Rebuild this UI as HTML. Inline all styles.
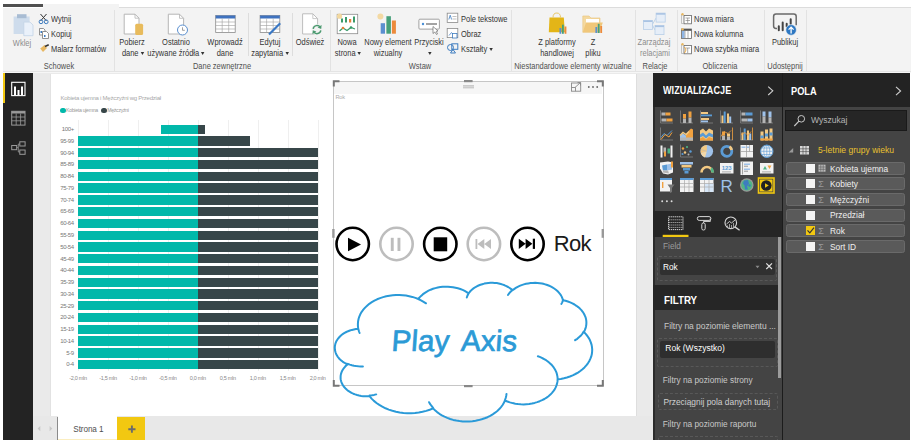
<!DOCTYPE html>
<html><head><meta charset="utf-8">
<style>
*{margin:0;padding:0;box-sizing:border-box}
html,body{width:911px;height:442px;overflow:hidden;background:#fff;font-family:"Liberation Sans",sans-serif;position:relative}
.a{position:absolute}
.t{position:absolute;white-space:nowrap;line-height:1}
.c{position:absolute;white-space:nowrap;line-height:1;text-align:center;width:200px}
.rb{font-size:8.7px;color:#333;transform:scaleX(0.86)}
.t.rb{transform-origin:0 0}
.c.rb{transform-origin:50% 0}
svg{position:absolute;overflow:visible}

</style></head><body>

<div class="a" style="left:3px;top:4px;width:40px;height:3px;background:#505050"></div>
<div class="a" style="left:43px;top:4px;width:76px;height:4px;background:#f3f3f3"></div>
<div class="a" style="left:119px;top:7px;width:792px;height:1px;background:#dcdcdc"></div>
<div class="a" style="left:3px;top:8px;width:908px;height:64px;background:#f3f3f3;border-bottom:1px solid #e4e4e4"></div>
<div class="a" style="left:3px;top:72px;width:908px;height:1px;background:#f6f6f6"></div>
<div class="a" style="left:3px;top:73px;width:30px;height:367px;background:#232323"></div>
<div class="a" style="left:3px;top:73px;width:2px;height:30px;background:#f2c811"></div>
<div class="a" style="left:33px;top:73px;width:620px;height:367px;background:#eaeaea"></div>
<div class="a" style="left:49.5px;top:73.5px;width:1.5px;height:342.5px;background:#e2e2e2"></div><div class="a" style="left:51px;top:73.5px;width:584.5px;height:342.5px;background:#fff"></div><div class="a" style="left:635.5px;top:73.5px;width:1.5px;height:342.5px;background:#dedede"></div>
<div class="a" style="left:653px;top:73px;width:257px;height:367px;background:#444"></div>
<div class="a" style="left:782px;top:73px;width:1px;height:367px;background:#1c1c1c"></div><div class="a" style="left:653px;top:73px;width:1.5px;height:367px;background:#2c2c2c"></div>

<div class="a" style="left:114px;top:10px;width:1px;height:61px;background:#e2e2e2"></div><div class="a" style="left:330px;top:10px;width:1px;height:61px;background:#e2e2e2"></div><div class="a" style="left:511px;top:10px;width:1px;height:61px;background:#e2e2e2"></div><div class="a" style="left:635px;top:10px;width:1px;height:61px;background:#e2e2e2"></div><div class="a" style="left:677px;top:10px;width:1px;height:61px;background:#e2e2e2"></div><div class="a" style="left:764px;top:10px;width:1px;height:61px;background:#e2e2e2"></div><div class="a" style="left:806px;top:10px;width:1px;height:61px;background:#e2e2e2"></div><div class="a" style="left:248px;top:13px;width:1px;height:43px;background:#dddddd"></div><div class="a" style="left:292px;top:13px;width:1px;height:43px;background:#dddddd"></div><svg style="left:0;top:0" width="911" height="72" viewBox="0 0 911 72">
<!-- Wklej -->
<rect x="13.6" y="16.5" width="16" height="17.5" fill="#cedcec"/>
<rect x="17" y="14.2" width="9.5" height="4" fill="#a8bcd3"/>
<path d="M23.8,22.1 H30 L33,25 V35.7 H23.8 Z" fill="#eaf1fa" stroke="#c2d3e6" stroke-width="0.8"/>
<!-- scissors -->
<path d="M40.5,14 L46.5,21 M46.5,14 L40.5,21" stroke="#333" stroke-width="1"/>
<circle cx="41" cy="21.8" r="1.9" fill="none" stroke="#3d7cc0" stroke-width="1"/>
<circle cx="46.2" cy="21.8" r="1.9" fill="none" stroke="#3d7cc0" stroke-width="1"/>
<!-- copy -->
<path d="M39.5,28.5 H43.5 L45,30 V35 H39.5 Z" fill="#fff" stroke="#777" stroke-width="0.8"/>
<path d="M42.5,31.5 H46.5 L48.5,33.5 V38.5 H42.5 Z" fill="#fff" stroke="#777" stroke-width="0.8"/>
<rect x="40.5" y="31" width="1.5" height="2" fill="#3d7cc0"/><rect x="44" y="35" width="1.5" height="2" fill="#3d7cc0"/>
<!-- brush -->
<path d="M40.2,48.5 L44.5,45 L47,48 L43,52 Z" fill="#e8b862"/>
<path d="M45,46.5 L48.7,44.7" stroke="#333" stroke-width="1.6"/>
<!-- Pobierz dane -->
<path d="M124.2,14.2 H135 L139,18.2 V34 H124.2 Z" fill="#fff" stroke="#b5b5b5" stroke-width="1"/><path d="M135,14.2 V18.2 H139" fill="none" stroke="#b5b5b5" stroke-width="0.8"/>
<rect x="135.2" y="23.8" width="7.9" height="11.1" rx="1.5" fill="#e8bb5c"/>
<!-- Ostatnio -->
<path d="M168.3,14.2 H179.5 L183.6,18.3 V34 H168.3 Z" fill="#fff" stroke="#b5b5b5" stroke-width="1"/><path d="M179.5,14.2 V18.3 H183.6" fill="none" stroke="#b5b5b5" stroke-width="0.8"/>
<circle cx="182.5" cy="30" r="5" fill="#fff" stroke="#5a8fd0" stroke-width="1"/>
<path d="M182.5,27.3 V30.3 H184.8" stroke="#888" stroke-width="0.8" fill="none"/>
<!-- Wprowadz -->
<rect x="215.7" y="15.5" width="19.5" height="16.9" fill="#fff" stroke="#8a8a8a" stroke-width="0.8"/>
<rect x="215.7" y="15.5" width="19.5" height="3" fill="#3f72bf"/>
<path d="M222.2,18.5 V32.4 M228.7,18.5 V32.4 M215.7,22 H235.2 M215.7,25.5 H235.2 M215.7,29 H235.2" stroke="#a0a0a0" stroke-width="0.6"/>
<!-- Edytuj -->
<rect x="260.1" y="15.5" width="19.7" height="16.9" fill="#fff" stroke="#8a8a8a" stroke-width="0.8"/>
<rect x="260.1" y="15.5" width="19.7" height="3" fill="#3f72bf"/>
<path d="M266.6,18.5 V32.4 M273.2,18.5 V32.4 M260.1,22 H279.8 M260.1,25.5 H279.8 M260.1,29 H279.8" stroke="#a0a0a0" stroke-width="0.6"/>
<path d="M269,34.5 L280.2,23.3" stroke="#3a78c5" stroke-width="2.2"/>
<!-- Odswiez -->
<path d="M302.6,13.8 H312.8 L317.6,18.6 V34 H302.6 Z" fill="#fff" stroke="#bdbdbd" stroke-width="1"/>
<path d="M312.8,13.8 V18.6 H317.6" fill="none" stroke="#bdbdbd" stroke-width="0.8"/>
<circle cx="317" cy="29.6" r="5.6" fill="#f3f3f3"/>
<path d="M313.2,28.8 A3.9,3.9 0 0 1 320.3,27.3" fill="none" stroke="#4c9a70" stroke-width="1.5"/>
<path d="M321.6,25 L321.2,29 L317.6,27.6 Z" fill="#4c9a70"/>
<path d="M320.8,30.4 A3.9,3.9 0 0 1 313.7,31.9" fill="none" stroke="#4c9a70" stroke-width="1.5"/>
<path d="M312.4,34.2 L312.8,30.2 L316.4,31.6 Z" fill="#4c9a70"/>
<!-- Nowa strona -->
<rect x="337.2" y="14.3" width="20.5" height="19.4" fill="#fff" stroke="#8c8c8c" stroke-width="0.8"/>
<rect x="341" y="18.5" width="2" height="4" fill="#3a9a6a"/><rect x="345" y="17" width="2" height="5.5" fill="#3a9a6a"/><rect x="349" y="19" width="2.2" height="3.5" fill="#e8803a"/><rect x="353" y="16.5" width="2" height="6" fill="#3a9a6a"/>
<path d="M339.5,31 L343,28 L347,30.5 L351,27.5 L355,29" stroke="#3a9a6a" stroke-width="1.2" fill="none"/>
<circle cx="343" cy="28" r="1.3" fill="#e8803a"/><circle cx="351" cy="27.5" r="1.3" fill="#3a9a6a"/>
<circle cx="339.5" cy="16.2" r="2.6" fill="#f2d8a0"/>
<!-- Nowy element -->
<rect x="380.7" y="23.2" width="4.3" height="10.5" fill="#5b8fd0"/>
<rect x="386.4" y="16.2" width="4.5" height="17.5" fill="#46a07a"/>
<rect x="391.9" y="20.5" width="4" height="13.2" fill="#ec8a3c"/>
<circle cx="380.4" cy="16.4" r="3" fill="#f3d9a3"/>
<!-- Przyciski -->
<rect x="418.9" y="19.2" width="20.5" height="9.9" rx="1" fill="#fff" stroke="#8c8c8c" stroke-width="0.8"/>
<circle cx="423" cy="24" r="1.2" fill="#4a8fd6"/>
<path d="M426,24 H437" stroke="#666" stroke-width="1.2"/>
<path d="M433,26.5 L433,33.5 L434.8,32 L436.5,34.5 L437.5,34 L436.2,31.4 L438,31 Z" fill="#fff" stroke="#555" stroke-width="0.6"/>
<!-- Pole tekstowe -->
<rect x="447.2" y="13.2" width="10.6" height="9.2" fill="#fff" stroke="#8a8a8a" stroke-width="0.8"/>
<path d="M448.8,19.5 L450.2,15.2 L451.6,19.5" stroke="#3d7cc0" stroke-width="0.8" fill="none"/>
<path d="M452.5,16.5 H456.5 M452.5,19 H456.5" stroke="#999" stroke-width="0.6"/>
<!-- Obraz -->
<rect x="447.2" y="28.4" width="10.6" height="9.2" fill="#fff" stroke="#8a8a8a" stroke-width="0.8"/>
<path d="M449,35.5 L451.5,32.5 L454,35.5" stroke="#5a8fd0" stroke-width="0.9" fill="none"/>
<rect x="452.5" y="33.5" width="4.5" height="4.5" fill="#fff" stroke="#3d7cc0" stroke-width="0.8"/>
<!-- Ksztalty -->
<circle cx="450.5" cy="47.5" r="3" fill="none" stroke="#3d7cc0" stroke-width="1"/>
<rect x="451.8" y="43.8" width="6" height="5.5" fill="none" stroke="#3d7cc0" stroke-width="1"/>
<path d="M450.5,53 L453,49.5 L455.5,53 Z" fill="none" stroke="#3d7cc0" stroke-width="1"/>
<!-- Z platformy -->
<path d="M549.5,17.6 L563.8,17.6 L564.9,32.3 L548.8,32.3 Z" fill="#e3b517"/>
<path d="M553,17.6 Q553,13 556.8,13 Q560.5,13 560.5,17.6" fill="none" stroke="#e8c766" stroke-width="1"/>
<rect x="559.5" y="28" width="1.8" height="5.8" fill="#5b8fd0"/><rect x="562" y="24.7" width="1.8" height="9.1" fill="#46a07a"/><rect x="564.6" y="26.5" width="1.8" height="7.3" fill="#ec8a3c"/>
<!-- Z pliku -->
<path d="M582.8,16 H589 L591,18 H600 V32.3 H582.8 Z" fill="#f4d9a0" stroke="#e9c47a" stroke-width="0.6"/>
<rect x="586" y="19" width="13" height="8" fill="#fff"/>
<path d="M582.8,32.3 L586,22.5 H602.8 L599.5,32.3 Z" fill="#f0c77a"/>
<rect x="595.4" y="27" width="1.8" height="6" fill="#5b8fd0"/><rect x="597.8" y="23.8" width="1.8" height="9.2" fill="#46a07a"/><rect x="600.3" y="26" width="1.8" height="7" fill="#ec8a3c"/>
<!-- Zarzadzaj -->
<path d="M652.4,24.5 L656.1,18 M652.4,25 L655,30" stroke="#b8cfe8" stroke-width="0.9"/>
<rect x="643.4" y="20.4" width="9" height="9.1" fill="#e6eef8" stroke="#b8cfe8" stroke-width="0.8"/><rect x="643.4" y="20.4" width="9" height="1.6" fill="#a9c3e3"/>
<rect x="656.1" y="13.1" width="9.1" height="9" fill="#e6eef8" stroke="#b8cfe8" stroke-width="0.8"/><rect x="656.1" y="13.1" width="9.1" height="1.6" fill="#a9c3e3"/>
<rect x="655" y="25.5" width="9" height="9.1" fill="#e6eef8" stroke="#b8cfe8" stroke-width="0.8"/><rect x="655" y="25.5" width="9" height="1.6" fill="#a9c3e3"/>
<!-- Obliczenia icons -->
<rect x="684" y="15.5" width="7.4" height="8.3" fill="#fff" stroke="#666" stroke-width="0.8"/><path d="M685.5,18 H690 M685.5,20.5 H690 M687.7,18 V23" stroke="#777" stroke-width="0.6"/><path d="M681.5,14 V23.5 H684" stroke="#aaa" stroke-width="0.7" fill="none"/><circle cx="682.5" cy="14.2" r="1.2" fill="#e8b862"/>
<rect x="681.5" y="29" width="9.9" height="9.5" fill="#fff" stroke="#666" stroke-width="0.8"/><rect x="681.5" y="29" width="9.9" height="1.8" fill="#555"/><rect x="682" y="31" width="2.5" height="7" fill="#8fb6e6"/><path d="M685,31 V38.5 M688,31 V38.5" stroke="#777" stroke-width="0.6"/><circle cx="682.5" cy="29.2" r="1.2" fill="#e8b862"/>
<rect x="684" y="45.5" width="7.4" height="8.3" fill="#fff" stroke="#666" stroke-width="0.8"/><path d="M685.5,48 H690 M687.7,48 V53" stroke="#777" stroke-width="0.6"/><path d="M681.5,44 V53.5 H684" stroke="#aaa" stroke-width="0.7" fill="none"/><path d="M684.5,47 L686,50 L684.5,53" stroke="#e8a030" stroke-width="0.9" fill="none"/><circle cx="682.5" cy="44.2" r="1.2" fill="#e8b862"/>
<!-- Publikuj -->
<path d="M777,28.4 H776 Q773.6,28.4 773.6,26 V16.5 Q773.6,14.1 776,14.1 H793.8 Q796.2,14.1 796.2,16.5 V25.2" fill="none" stroke="#6a6a6a" stroke-width="1.5"/>
<path d="M778.8,26.2 V30.2 M782.7,22.4 V30.2 M786.7,23.7 V26.5 M790.7,19.2 V24" stroke="#444" stroke-width="2" stroke-linecap="round"/>
<circle cx="791.1" cy="29.9" r="5.3" fill="#2e78c2" stroke="#f3f3f3" stroke-width="0.6"/>
<path d="M791.1,33.4 V27.3 M788.6,29.6 L791.1,27.1 L793.6,29.6" stroke="#fff" stroke-width="1.3" fill="none"/>
</svg><div class="c rb" style="left:-41.4px;top:62.4px;font-size:8.7px;color:#505050;">Schowek</div>
<div class="c rb" style="left:121.5px;top:62.4px;font-size:8.7px;color:#505050;">Dane zewnętrzne</div>
<div class="c rb" style="left:320.0px;top:62.4px;font-size:8.7px;color:#505050;">Wstaw</div>
<div class="c rb" style="left:472.5px;top:62.4px;font-size:8.7px;color:#505050;">Niestandardowe elementy wizualne</div>
<div class="c rb" style="left:554.5px;top:62.4px;font-size:8.7px;color:#505050;">Relacje</div>
<div class="c rb" style="left:619.6px;top:62.4px;font-size:8.7px;color:#505050;">Obliczenia</div>
<div class="c rb" style="left:685.0px;top:62.4px;font-size:8.7px;color:#505050;">Udostępnij</div>
<div class="c rb" style="left:-78.4px;top:39.0px;font-size:8.7px;color:#8c8c8c;">Wklej</div>
<div class="t rb" style="left:51.4px;top:15.2px;font-size:8.7px;color:#333;">Wytnij</div>
<div class="t rb" style="left:51.4px;top:29.8px;font-size:8.7px;color:#333;">Kopiuj</div>
<div class="t rb" style="left:51.4px;top:45.0px;font-size:8.7px;color:#333;">Malarz formatów</div>
<div class="c rb" style="left:32.0px;top:38.4px;font-size:8.7px;color:#333;">Pobierz</div>
<div class="c rb" style="left:32.5px;top:48.7px;font-size:8.7px;color:#333;">dane<span style="display:inline-block;width:0;height:0;border-left:2.6px solid transparent;border-right:2.6px solid transparent;border-top:3.4px solid #333;margin-left:2.5px;vertical-align:1.2px"></span></div>
<div class="c rb" style="left:76.4px;top:38.4px;font-size:8.7px;color:#333;">Ostatnio</div>
<div class="c rb" style="left:76.0px;top:48.7px;font-size:8.7px;color:#333;">używane źródła<span style="display:inline-block;width:0;height:0;border-left:2.6px solid transparent;border-right:2.6px solid transparent;border-top:3.4px solid #333;margin-left:2.5px;vertical-align:1.2px"></span></div>
<div class="c rb" style="left:125.0px;top:38.4px;font-size:8.7px;color:#333;">Wprowadź</div>
<div class="c rb" style="left:125.0px;top:48.7px;font-size:8.7px;color:#333;">dane</div>
<div class="c rb" style="left:169.6px;top:38.4px;font-size:8.7px;color:#333;">Edytuj</div>
<div class="c rb" style="left:170.0px;top:48.7px;font-size:8.7px;color:#333;">zapytania<span style="display:inline-block;width:0;height:0;border-left:2.6px solid transparent;border-right:2.6px solid transparent;border-top:3.4px solid #333;margin-left:2.5px;vertical-align:1.2px"></span></div>
<div class="c rb" style="left:210.2px;top:38.4px;font-size:8.7px;color:#333;">Odśwież</div>
<div class="c rb" style="left:247.4px;top:38.4px;font-size:8.7px;color:#333;">Nowa</div>
<div class="c rb" style="left:248.0px;top:48.7px;font-size:8.7px;color:#333;">strona<span style="display:inline-block;width:0;height:0;border-left:2.6px solid transparent;border-right:2.6px solid transparent;border-top:3.4px solid #333;margin-left:2.5px;vertical-align:1.2px"></span></div>
<div class="c rb" style="left:287.5px;top:38.4px;font-size:8.7px;color:#333;">Nowy element</div>
<div class="c rb" style="left:287.5px;top:48.7px;font-size:8.7px;color:#333;">wizualny</div>
<div class="c rb" style="left:329.0px;top:38.4px;font-size:8.7px;color:#333;">Przyciski</div>
<div class="c rb" style="left:328.8px;top:48.7px;font-size:8.7px;color:#333;"><span style="display:inline-block;width:0;height:0;border-left:2.6px solid transparent;border-right:2.6px solid transparent;border-top:3.4px solid #333;margin-left:2.5px;vertical-align:1.2px"></span></div>
<div class="t rb" style="left:460.5px;top:14.6px;font-size:8.7px;color:#333;">Pole tekstowe</div>
<div class="t rb" style="left:460.5px;top:29.5px;font-size:8.7px;color:#333;">Obraz</div>
<div class="t rb" style="left:460.5px;top:44.9px;font-size:8.7px;color:#333;">Kształty<span style="display:inline-block;width:0;height:0;border-left:2.6px solid transparent;border-right:2.6px solid transparent;border-top:3.4px solid #333;margin-left:2.5px;vertical-align:1.2px"></span></div>
<div class="c rb" style="left:457.0px;top:38.4px;font-size:8.7px;color:#333;">Z platformy</div>
<div class="c rb" style="left:457.0px;top:48.7px;font-size:8.7px;color:#333;">handlowej</div>
<div class="c rb" style="left:492.6px;top:38.4px;font-size:8.7px;color:#333;">Z</div>
<div class="c rb" style="left:492.5px;top:48.7px;font-size:8.7px;color:#333;">pliku</div>
<div class="c rb" style="left:554.4px;top:38.4px;font-size:8.7px;color:#8c8c8c;">Zarządzaj</div>
<div class="c rb" style="left:554.5px;top:48.7px;font-size:8.7px;color:#8c8c8c;">relacjami</div>
<div class="t rb" style="left:694.2px;top:14.6px;font-size:8.7px;color:#333;">Nowa miara</div>
<div class="t rb" style="left:694.2px;top:29.5px;font-size:8.7px;color:#333;">Nowa kolumna</div>
<div class="t rb" style="left:694.2px;top:44.9px;font-size:8.7px;color:#333;">Nowa szybka miara</div>
<div class="c rb" style="left:685.0px;top:38.4px;font-size:8.7px;color:#333;">Publikuj</div>
<div class="a" style="left:78.0px;top:120px;width:1px;height:251px;background:#efefef"></div>
<div class="a" style="left:108.0px;top:120px;width:1px;height:251px;background:#efefef"></div>
<div class="a" style="left:137.9px;top:120px;width:1px;height:251px;background:#efefef"></div>
<div class="a" style="left:167.8px;top:120px;width:1px;height:251px;background:#efefef"></div>
<div class="a" style="left:197.8px;top:120px;width:1px;height:251px;background:#efefef"></div>
<div class="a" style="left:227.8px;top:120px;width:1px;height:251px;background:#efefef"></div>
<div class="a" style="left:257.7px;top:120px;width:1px;height:251px;background:#efefef"></div>
<div class="a" style="left:287.6px;top:120px;width:1px;height:251px;background:#efefef"></div>
<div class="a" style="left:317.6px;top:120px;width:1px;height:251px;background:#efefef"></div>
<div class="a" style="left:161.2px;top:124.60px;width:36.8px;height:9.3px;background:#01b8aa"></div>
<div class="a" style="left:198px;top:124.60px;width:6.6px;height:9.3px;background:#374649"></div>
<div class="t" style="left:23.8px;width:50px;text-align:right;top:126.0px;font-size:6px;color:#777;letter-spacing:-0.35px">100+</div>
<div class="a" style="left:78.0px;top:136.37px;width:120.0px;height:9.3px;background:#01b8aa"></div>
<div class="a" style="left:198px;top:136.37px;width:52.0px;height:9.3px;background:#374649"></div>
<div class="t" style="left:23.8px;width:50px;text-align:right;top:137.8px;font-size:6px;color:#777;letter-spacing:-0.35px">95-99</div>
<div class="a" style="left:78.0px;top:148.14px;width:120.0px;height:9.3px;background:#01b8aa"></div>
<div class="a" style="left:198px;top:148.14px;width:119.6px;height:9.3px;background:#374649"></div>
<div class="t" style="left:23.8px;width:50px;text-align:right;top:149.6px;font-size:6px;color:#777;letter-spacing:-0.35px">90-94</div>
<div class="a" style="left:78.0px;top:159.91px;width:120.0px;height:9.3px;background:#01b8aa"></div>
<div class="a" style="left:198px;top:159.91px;width:119.6px;height:9.3px;background:#374649"></div>
<div class="t" style="left:23.8px;width:50px;text-align:right;top:161.4px;font-size:6px;color:#777;letter-spacing:-0.35px">85-89</div>
<div class="a" style="left:78.0px;top:171.68px;width:120.0px;height:9.3px;background:#01b8aa"></div>
<div class="a" style="left:198px;top:171.68px;width:119.6px;height:9.3px;background:#374649"></div>
<div class="t" style="left:23.8px;width:50px;text-align:right;top:173.1px;font-size:6px;color:#777;letter-spacing:-0.35px">80-84</div>
<div class="a" style="left:78.0px;top:183.45px;width:120.0px;height:9.3px;background:#01b8aa"></div>
<div class="a" style="left:198px;top:183.45px;width:119.6px;height:9.3px;background:#374649"></div>
<div class="t" style="left:23.8px;width:50px;text-align:right;top:184.9px;font-size:6px;color:#777;letter-spacing:-0.35px">75-79</div>
<div class="a" style="left:78.0px;top:195.22px;width:120.0px;height:9.3px;background:#01b8aa"></div>
<div class="a" style="left:198px;top:195.22px;width:119.6px;height:9.3px;background:#374649"></div>
<div class="t" style="left:23.8px;width:50px;text-align:right;top:196.7px;font-size:6px;color:#777;letter-spacing:-0.35px">70-74</div>
<div class="a" style="left:78.0px;top:206.99px;width:120.0px;height:9.3px;background:#01b8aa"></div>
<div class="a" style="left:198px;top:206.99px;width:119.6px;height:9.3px;background:#374649"></div>
<div class="t" style="left:23.8px;width:50px;text-align:right;top:208.4px;font-size:6px;color:#777;letter-spacing:-0.35px">65-69</div>
<div class="a" style="left:78.0px;top:218.76px;width:120.0px;height:9.3px;background:#01b8aa"></div>
<div class="a" style="left:198px;top:218.76px;width:119.6px;height:9.3px;background:#374649"></div>
<div class="t" style="left:23.8px;width:50px;text-align:right;top:220.2px;font-size:6px;color:#777;letter-spacing:-0.35px">60-64</div>
<div class="a" style="left:78.0px;top:230.53px;width:120.0px;height:9.3px;background:#01b8aa"></div>
<div class="a" style="left:198px;top:230.53px;width:119.6px;height:9.3px;background:#374649"></div>
<div class="t" style="left:23.8px;width:50px;text-align:right;top:232.0px;font-size:6px;color:#777;letter-spacing:-0.35px">55-59</div>
<div class="a" style="left:78.0px;top:242.30px;width:120.0px;height:9.3px;background:#01b8aa"></div>
<div class="a" style="left:198px;top:242.30px;width:119.6px;height:9.3px;background:#374649"></div>
<div class="t" style="left:23.8px;width:50px;text-align:right;top:243.8px;font-size:6px;color:#777;letter-spacing:-0.35px">50-54</div>
<div class="a" style="left:78.0px;top:254.07px;width:120.0px;height:9.3px;background:#01b8aa"></div>
<div class="a" style="left:198px;top:254.07px;width:119.6px;height:9.3px;background:#374649"></div>
<div class="t" style="left:23.8px;width:50px;text-align:right;top:255.5px;font-size:6px;color:#777;letter-spacing:-0.35px">45-49</div>
<div class="a" style="left:78.0px;top:265.84px;width:120.0px;height:9.3px;background:#01b8aa"></div>
<div class="a" style="left:198px;top:265.84px;width:119.6px;height:9.3px;background:#374649"></div>
<div class="t" style="left:23.8px;width:50px;text-align:right;top:267.3px;font-size:6px;color:#777;letter-spacing:-0.35px">40-44</div>
<div class="a" style="left:78.0px;top:277.61px;width:120.0px;height:9.3px;background:#01b8aa"></div>
<div class="a" style="left:198px;top:277.61px;width:119.6px;height:9.3px;background:#374649"></div>
<div class="t" style="left:23.8px;width:50px;text-align:right;top:279.1px;font-size:6px;color:#777;letter-spacing:-0.35px">35-39</div>
<div class="a" style="left:78.0px;top:289.38px;width:120.0px;height:9.3px;background:#01b8aa"></div>
<div class="a" style="left:198px;top:289.38px;width:119.6px;height:9.3px;background:#374649"></div>
<div class="t" style="left:23.8px;width:50px;text-align:right;top:290.8px;font-size:6px;color:#777;letter-spacing:-0.35px">30-34</div>
<div class="a" style="left:78.0px;top:301.15px;width:120.0px;height:9.3px;background:#01b8aa"></div>
<div class="a" style="left:198px;top:301.15px;width:119.6px;height:9.3px;background:#374649"></div>
<div class="t" style="left:23.8px;width:50px;text-align:right;top:302.6px;font-size:6px;color:#777;letter-spacing:-0.35px">25-29</div>
<div class="a" style="left:78.0px;top:312.92px;width:120.0px;height:9.3px;background:#01b8aa"></div>
<div class="a" style="left:198px;top:312.92px;width:119.6px;height:9.3px;background:#374649"></div>
<div class="t" style="left:23.8px;width:50px;text-align:right;top:314.4px;font-size:6px;color:#777;letter-spacing:-0.35px">20-24</div>
<div class="a" style="left:78.0px;top:324.69px;width:120.0px;height:9.3px;background:#01b8aa"></div>
<div class="a" style="left:198px;top:324.69px;width:119.6px;height:9.3px;background:#374649"></div>
<div class="t" style="left:23.8px;width:50px;text-align:right;top:326.1px;font-size:6px;color:#777;letter-spacing:-0.35px">15-19</div>
<div class="a" style="left:78.0px;top:336.46px;width:120.0px;height:9.3px;background:#01b8aa"></div>
<div class="a" style="left:198px;top:336.46px;width:119.6px;height:9.3px;background:#374649"></div>
<div class="t" style="left:23.8px;width:50px;text-align:right;top:337.9px;font-size:6px;color:#777;letter-spacing:-0.35px">10-14</div>
<div class="a" style="left:78.0px;top:348.23px;width:120.0px;height:9.3px;background:#01b8aa"></div>
<div class="a" style="left:198px;top:348.23px;width:119.6px;height:9.3px;background:#374649"></div>
<div class="t" style="left:23.8px;width:50px;text-align:right;top:349.7px;font-size:6px;color:#777;letter-spacing:-0.35px">5-9</div>
<div class="a" style="left:78.0px;top:360.00px;width:120.0px;height:9.3px;background:#01b8aa"></div>
<div class="a" style="left:198px;top:360.00px;width:119.6px;height:9.3px;background:#374649"></div>
<div class="t" style="left:23.8px;width:50px;text-align:right;top:361.4px;font-size:6px;color:#777;letter-spacing:-0.35px">0-4</div>
<div class="c" style="left:-22.0px;top:376.3px;font-size:5.5px;color:#888;letter-spacing:-0.3px">-2,0 mln</div>
<div class="c" style="left:8.0px;top:376.3px;font-size:5.5px;color:#888;letter-spacing:-0.3px">-1,5 mln</div>
<div class="c" style="left:37.9px;top:376.3px;font-size:5.5px;color:#888;letter-spacing:-0.3px">-1,0 mln</div>
<div class="c" style="left:67.8px;top:376.3px;font-size:5.5px;color:#888;letter-spacing:-0.3px">-0,5 mln</div>
<div class="c" style="left:97.8px;top:376.3px;font-size:5.5px;color:#888;letter-spacing:-0.3px">0,0 mln</div>
<div class="c" style="left:127.8px;top:376.3px;font-size:5.5px;color:#888;letter-spacing:-0.3px">0,5 mln</div>
<div class="c" style="left:157.7px;top:376.3px;font-size:5.5px;color:#888;letter-spacing:-0.3px">1,0 mln</div>
<div class="c" style="left:187.6px;top:376.3px;font-size:5.5px;color:#888;letter-spacing:-0.3px">1,5 mln</div>
<div class="c" style="left:217.6px;top:376.3px;font-size:5.5px;color:#888;letter-spacing:-0.3px">2,0 mln</div>
<div class="t" style="left:60.5px;top:95.2px;font-size:6px;color:#a8a8a8;letter-spacing:-0.25px">Kobieta ujemna i Mężczyźni wg Przedział</div>
<div class="a" style="left:60.2px;top:107.9px;width:5.4px;height:5.4px;border-radius:50%;background:#01b8aa"></div>
<div class="t" style="left:66px;top:108px;font-size:5.2px;color:#999;letter-spacing:-0.3px">Kobieta ujemna</div>
<div class="a" style="left:101.2px;top:107.9px;width:5.4px;height:5.4px;border-radius:50%;background:#374649"></div>
<div class="t" style="left:107.2px;top:108px;font-size:5.2px;color:#999;letter-spacing:-0.3px">Mężczyźni</div>
<div class="a" style="left:334px;top:82px;width:268px;height:12px;background:#f6f6f6"></div>
<div class="a" style="left:333px;top:80.5px;width:270.5px;height:305.5px;border:1px solid #c6c6c6"></div>
<svg style="left:0;top:0" width="911" height="442">
<path d="M333.8,86.5 V81.3 H339.5" fill="none" stroke="#777" stroke-width="2"/>
<path d="M597,81.3 H602.8 V86.5" fill="none" stroke="#777" stroke-width="2"/>
<path d="M333.8,380 V385.8 H339.5" fill="none" stroke="#777" stroke-width="2"/>
<path d="M597,385.8 H602.8 V380" fill="none" stroke="#777" stroke-width="2"/>
<rect x="464" y="80" width="8.6" height="2.2" fill="#888"/>
<rect x="464" y="385" width="8.6" height="2.2" fill="#888"/>
<rect x="332.2" y="229" width="2.4" height="8.8" fill="#999"/>
<rect x="601.6" y="229" width="2.4" height="8.8" fill="#999"/>
<rect x="463" y="85" width="11" height="3.4" fill="#cbcbcb"/><rect x="463" y="86.5" width="11" height="0.5" fill="#e0e0e0"/>
<rect x="571.5" y="83" width="9.2" height="8.2" fill="none" stroke="#888" stroke-width="0.9"/>
<path d="M575,87.5 L580.5,82.5 M577.5,82.5 H580.5 V85.5" fill="none" stroke="#888" stroke-width="0.9"/>
<path d="M571.5,87.5 H575.5 V91.2" fill="none" stroke="#888" stroke-width="0.9"/>
<circle cx="588.8" cy="87" r="0.9" fill="#666"/><circle cx="593" cy="87" r="0.9" fill="#666"/><circle cx="597.2" cy="87" r="0.9" fill="#666"/>
<circle cx="352.7" cy="244" r="16.2" fill="none" stroke="#000" stroke-width="2.6"/>
<path d="M348,237.8 L361,244.5 L348,251.3 Z" fill="#000"/>
<circle cx="396.5" cy="244" r="16.2" fill="none" stroke="#bdbdbd" stroke-width="2.6"/>
<rect x="390.8" y="237.8" width="2.9" height="13.2" fill="#bdbdbd"/><rect x="397.5" y="237.8" width="2.9" height="13.2" fill="#bdbdbd"/>
<circle cx="440.3" cy="244" r="16.2" fill="none" stroke="#000" stroke-width="2.6"/>
<rect x="433.7" y="237.3" width="13.5" height="14" fill="#000"/>
<circle cx="483.9" cy="244" r="16.2" fill="none" stroke="#bdbdbd" stroke-width="2.6"/>
<rect x="475.5" y="239" width="1.8" height="10" fill="#bdbdbd"/>
<path d="M484.3,239 L477.5,244 L484.3,249 Z M491,239 L484.3,244 L491,249 Z" fill="#bdbdbd"/>
<circle cx="527.5" cy="244" r="16.2" fill="none" stroke="#000" stroke-width="2.6"/>
<path d="M518.8,238.7 L525.6,243.8 L518.8,248.9 Z M525.6,238.7 L532.4,243.8 L525.6,248.9 Z" fill="#000"/>
<rect x="532.8" y="238.7" width="2.2" height="10.2" fill="#000"/>
</svg>
<div class="t" style="left:335.4px;top:95.4px;font-size:5.6px;color:#aaa;letter-spacing:-0.2px">Rok</div>
<div class="t" style="left:553.8px;top:232.5px;font-size:22px;color:#1a1a1a;letter-spacing:-0.7px">Rok</div>
<div class="t" style="left:390.5px;top:325.7px;font-size:29.5px;color:#2b9ad6;letter-spacing:0.1px;word-spacing:5px;-webkit-text-stroke:0.7px #2b9ad6;transform:skewX(-4deg);transform-origin:0 25px">Play Axis</div>

<svg style="left:0;top:0" width="40" height="160">
<rect x="11.7" y="82.3" width="13.3" height="13.3" fill="none" stroke="#fff" stroke-width="1.1"/>
<rect x="14" y="86.5" width="2" height="8.5" fill="#fff"/><rect x="17.5" y="90" width="2" height="5" fill="#fff"/><rect x="21" y="86.5" width="2" height="8.5" fill="#fff"/>
<rect x="11.7" y="111.3" width="13.3" height="13.8" fill="none" stroke="#9a9a9a" stroke-width="1"/>
<rect x="11.7" y="111.3" width="13.3" height="2.2" fill="#9a9a9a"/>
<path d="M11.7,117 H25 M11.7,120.8 H25 M16.2,113.5 V125 M20.6,113.5 V125" stroke="#9a9a9a" stroke-width="0.8"/>
<rect x="11.7" y="145.5" width="5" height="4.2" fill="none" stroke="#9a9a9a" stroke-width="1"/>
<rect x="19.8" y="141.8" width="5.3" height="4.2" fill="none" stroke="#9a9a9a" stroke-width="1"/>
<rect x="19.8" y="150" width="5.3" height="4.3" fill="none" stroke="#9a9a9a" stroke-width="1"/>
<path d="M16.7,147.6 H18.3 V144 H19.8 M18.3,147.6 V152 H19.8" fill="none" stroke="#9a9a9a" stroke-width="0.8"/>
</svg>
<div class="a" style="left:33px;top:416px;width:620px;height:24px;background:#e8e8e8"></div>
<div class="a" style="left:57px;top:417px;width:1px;height:23px;background:#8a8a8a"></div>
<svg style="left:0;top:400px" width="70" height="42"><path d="M40.3,26 L37.6,28.6 L40.3,31.2 Z" fill="#c8c8c8"/><path d="M49.6,26 L52.3,28.6 L49.6,31.2 Z" fill="#c8c8c8"/></svg>
<div class="a" style="left:58px;top:415.5px;width:59.3px;height:24.5px;background:#fff;border-bottom:1px solid #fbeec0"></div>
<div class="t" style="left:73.3px;top:426px;font-size:8.2px;color:#505050;letter-spacing:-0.1px">Strona 1</div>
<div class="a" style="left:117.3px;top:417px;width:28.2px;height:22.5px;background:#f2c811"></div>
<svg style="left:0;top:400px" width="160" height="42">
<path d="M131.9,25.6 V32.8 M128.3,29.2 H135.5" stroke="#6b6b6b" stroke-width="1.9"/>
</svg>


<div class="a" style="left:653px;top:73px;width:129px;height:34px;background:#232323"></div>
<div class="t" style="left:662.5px;top:85.2px;font-size:10.5px;font-weight:bold;color:#fff;transform:scaleX(0.86);transform-origin:0 0;letter-spacing:0.1px">WIZUALIZACJE</div>
<svg style="left:0;top:0" width="911" height="442">
<path d="M768.2,86.6 L772.8,90.8 L768.2,95" fill="none" stroke="#cfcfcf" stroke-width="1.1"/>
<g transform="translate(660,110.5)"><path d="M0.5,0 V12.5 H13" fill="none" stroke="#8a8a8a" stroke-width="0.7"/><rect x="1.5" y="2" width="4" height="3" fill="#b5b5b5"/><rect x="5.5" y="2" width="5" height="3" fill="#f0a140"/><rect x="1.5" y="8" width="5" height="3" fill="#b5b5b5"/><rect x="6.5" y="8" width="6" height="3" fill="#f0a140"/></g><g transform="translate(680,110.5)"><path d="M0.5,0 V12.5 H13" fill="none" stroke="#8a8a8a" stroke-width="0.7"/><rect x="3" y="8" width="3" height="4.5" fill="#b5b5b5"/><rect x="3" y="3.5" width="3" height="4.5" fill="#f0a140"/><rect x="8.5" y="7" width="3" height="5.5" fill="#b5b5b5"/><rect x="8.5" y="1" width="3" height="6" fill="#f0a140"/></g><g transform="translate(700,110.5)"><path d="M0.5,0 V12.5 H13" fill="none" stroke="#8a8a8a" stroke-width="0.7"/><rect x="1" y="1.5" width="7" height="2" fill="#f3c983"/><rect x="1" y="4" width="11" height="1.8" fill="#5b9bd5"/><rect x="1" y="7.5" width="8" height="2" fill="#f3c983"/><rect x="1" y="10" width="7" height="1.8" fill="#9fc2ea"/></g><g transform="translate(720,110.5)"><path d="M0.5,0 V12.5 H13" fill="none" stroke="#8a8a8a" stroke-width="0.7"/><rect x="1.5" y="5" width="2" height="7.5" fill="#f3c983"/><rect x="3.7" y="1" width="2" height="11.5" fill="#5b9bd5"/><rect x="7" y="3" width="2" height="9.5" fill="#f3c983"/><rect x="9.2" y="6" width="2" height="6.5" fill="#9fc2ea"/></g><g transform="translate(740,110.5)"><path d="M0.5,0 V12.5 H13" fill="none" stroke="#8a8a8a" stroke-width="0.7"/><rect x="1.5" y="2" width="4" height="3" fill="#b5b5b5"/><rect x="5.5" y="2" width="7" height="3" fill="#5b9bd5"/><rect x="1.5" y="8" width="6" height="3" fill="#b5b5b5"/><rect x="7.5" y="8" width="5" height="3" fill="#9fc2ea"/></g><g transform="translate(760,110.5)"><path d="M0.5,0 V12.5 H13" fill="none" stroke="#8a8a8a" stroke-width="0.7"/><rect x="2.5" y="1" width="3" height="5" fill="#9fc2ea"/><rect x="2.5" y="6" width="3" height="6.5" fill="#b5b5b5"/><rect x="8.5" y="1" width="3" height="6" fill="#9fc2ea"/><rect x="8.5" y="7" width="3" height="5.5" fill="#b5b5b5"/></g><g transform="translate(660,127.5)"><path d="M0.5,0 V12.5 H13" fill="none" stroke="#8a8a8a" stroke-width="0.7"/><polyline points="1,10 4,6 7,8 12,3" fill="none" stroke="#5b9bd5" stroke-width="1"/><polyline points="1,12 5,7 9,9.5 12,5" fill="none" stroke="#f0a140" stroke-width="1"/></g><g transform="translate(680,127.5)"><path d="M0,13 V8 L3,6 L6,8 L9,4 L13,6 V13 Z" fill="#9fc2ea"/><path d="M6,13 V7 L9,3 L11,1 L13,2 V13 Z" fill="#f0a140"/><path d="M0,13 V10 H13 V13 Z" fill="#b5b5b5"/><path d="M0,8 L3,5 L6,7 L9,4" fill="none" stroke="#f3c983" stroke-width="1.5"/></g><g transform="translate(700,127.5)"><path d="M0,13 V3 L3,1 L6,4 L9,1 L13,3 V13 Z" fill="#f3c983"/><path d="M0,10 V7 L3,5 L6,8 L9,5 L13,7 V10 L9,8.5 L6,11 L3,8.5 Z" fill="#5b9bd5"/><path d="M0,13 V11 L3,9.5 L6,12 L9,9.5 L13,11 V13 Z" fill="#f0a140"/></g><g transform="translate(720,127.5)"><path d="M0.5,0 V12.5 H13" fill="none" stroke="#8a8a8a" stroke-width="0.7"/><rect x="2" y="8" width="3" height="4.5" fill="#b5b5b5"/><rect x="2" y="4" width="3" height="4" fill="#f0a140"/><rect x="7" y="9" width="3" height="3.5" fill="#b5b5b5"/><rect x="7" y="6" width="3" height="3" fill="#f3c983"/><polyline points="1,9 4,4 8,6 11,3" fill="none" stroke="#f0a140" stroke-width="0.8"/><path d="M12.5,0 V12.5" stroke="#f0a140" stroke-width="0.8"/></g><g transform="translate(740,127.5)"><path d="M0.5,0 V12.5 H13" fill="none" stroke="#8a8a8a" stroke-width="0.7"/><rect x="1.5" y="5" width="2" height="7.5" fill="#f3c983"/><rect x="3.7" y="1" width="2" height="11.5" fill="#5b9bd5"/><rect x="7" y="3" width="2" height="9.5" fill="#f3c983"/><rect x="9.2" y="6" width="2" height="6.5" fill="#9fc2ea"/><polyline points="1,7 5,5 8,8 11,4" fill="none" stroke="#f0a140" stroke-width="0.8"/><path d="M12.5,0 V12.5" stroke="#f0a140" stroke-width="0.8"/></g><g transform="translate(760,127.5)"><rect x="0.5" y="4" width="3" height="9" fill="#f3c983"/><rect x="0.5" y="8" width="3" height="3" fill="#5b9bd5"/><rect x="5" y="2" width="3" height="11" fill="#f3c983"/><rect x="5" y="6" width="3" height="3" fill="#5b9bd5"/><rect x="9.5" y="1" width="3" height="12" fill="#f3c983"/><rect x="9.5" y="5" width="3" height="3" fill="#5b9bd5"/><rect x="0.5" y="11" width="12" height="2" fill="#f0a140"/></g><g transform="translate(660,144.5)"><rect x="0.5" y="1" width="2" height="12" fill="#f2f2f2"/><rect x="3.5" y="3" width="2.5" height="5" fill="#b5b5b5"/><rect x="4" y="7" width="2" height="5" fill="#f0a140"/><rect x="7.5" y="4" width="2.5" height="5" fill="#4fb585"/><rect x="10.5" y="1" width="2" height="12" fill="#f2f2f2"/></g><g transform="translate(680,144.5)"><path d="M0.5,0 V12.5 H13" fill="none" stroke="#8a8a8a" stroke-width="0.7"/><circle cx="3" cy="4" r="1.2" fill="#f0a140"/><circle cx="7" cy="2.5" r="1.1" fill="#4fb585"/><circle cx="5" cy="8" r="1.2" fill="#f3c983"/><circle cx="2.5" cy="9.5" r="1.1" fill="#5b9bd5"/><circle cx="10.5" cy="7" r="1.2" fill="#5b9bd5"/><circle cx="8.5" cy="10" r="1" fill="#b5b5b5"/></g><g transform="translate(700,144.5)"><circle cx="6.8" cy="6.8" r="6.3" fill="#9fc2ea"/><path d="M6.8,6.8 L6.8,0.5 A6.3,6.3 0 0 0 0.8,8.8 Z" fill="#f3c983"/><path d="M6.8,6.8 L0.8,8.8 A6.3,6.3 0 0 0 5,12.9 Z" fill="#f4d9a8"/><path d="M6.8,6.8 L0.8,5" stroke="#b5b5b5" stroke-width="0.6"/></g><g transform="translate(720,144.5)"><circle cx="6.8" cy="6.8" r="5" fill="none" stroke="#5b9bd5" stroke-width="2.8"/><path d="M9.5,2.2 A5,5 0 0 1 11.6,5.5" fill="none" stroke="#f3c983" stroke-width="2.8"/></g><g transform="translate(740,144.5)"><rect x="0.5" y="0.5" width="12.5" height="12.5" fill="#f2f2f2"/><path d="M0.5,7 H13 M6.5,0.5 V7 M9.5,0.5 V7 M6.5,7 V13" stroke="#999" stroke-width="0.7"/><rect x="1.5" y="2" width="4" height="1.5" fill="#9fc2ea"/><rect x="7" y="2" width="2" height="1.5" fill="#9fc2ea"/></g><g transform="translate(760,144.5)"><circle cx="6.8" cy="6.8" r="6.2" fill="#f2f2f2" stroke="#5b9bd5" stroke-width="1"/><path d="M0.6,6.8 H13 M6.8,0.6 V13 M2,3.5 H11.6 M2,10 H11.6" stroke="#5b9bd5" stroke-width="0.6"/><ellipse cx="6.8" cy="6.8" rx="3" ry="6.2" fill="none" stroke="#5b9bd5" stroke-width="0.6"/></g><g transform="translate(660,161.5)"><path d="M0,1 L8,0 L13,1 V11 L8,13 L3,12 L0,7 Z" fill="#f2f2f2"/><path d="M2,4 L7,3 L7,9 L3,9 Z" fill="#5b9bd5"/><path d="M7,3 L12,2 V8 L7,9 Z" fill="#9fc2ea"/><rect x="11" y="0" width="2" height="6" fill="#f0a140"/><path d="M3,9 L8,9 L9,12 L3,11 Z" fill="#b5b5b5"/></g><g transform="translate(680,161.5)"><rect x="0" y="0.5" width="13" height="2.5" fill="#9fc2ea"/><rect x="1.5" y="3.5" width="10" height="2.5" fill="#f3c983"/><rect x="3" y="6.5" width="7" height="2.5" fill="#5b9bd5"/><rect x="4.5" y="9.5" width="4" height="2.5" fill="#5b9bd5"/></g><g transform="translate(700,161.5)"><path d="M1.5,11 A5.5,5.5 0 0 1 12.5,11" fill="none" stroke="#f3c983" stroke-width="2.6"/><path d="M11.3,6.8 A5.5,5.5 0 0 1 12.5,11" fill="none" stroke="#4fb585" stroke-width="2.6"/></g><g transform="translate(720,161.5)"><rect x="0" y="1.5" width="13.5" height="10.5" fill="#f2f2f2"/><text x="6.7" y="8.5" font-family="Liberation Sans" font-size="6" font-weight="bold" fill="#5b9bd5" text-anchor="middle">123</text><rect x="2" y="10" width="9" height="0.8" fill="#999"/></g><g transform="translate(740,161.5)"><rect x="0.5" y="0" width="12.5" height="13.5" fill="#f2f2f2"/><rect x="2" y="0.5" width="0.9" height="12.5" fill="#999"/><rect x="4" y="2" width="6" height="1.5" fill="#9fc2ea"/><rect x="4" y="4.2" width="4" height="1" fill="#999"/><rect x="4" y="7" width="6" height="1.5" fill="#9fc2ea"/><rect x="4" y="9.2" width="4" height="1" fill="#999"/></g><g transform="translate(760,161.5)"><rect x="0" y="1.5" width="13.5" height="10.5" fill="#f2f2f2"/><path d="M3,8 L5,4.5 L7,8 Z" fill="#4fb585"/><path d="M7.5,4 L11.5,4 L9.5,7.5 Z" fill="#f0a140"/><rect x="2" y="10" width="9" height="0.8" fill="#999"/></g><g transform="translate(660,177.5)"><rect x="0" y="0.5" width="12" height="13.5" fill="#f2f2f2"/><rect x="0" y="0.5" width="12" height="2" fill="#5b9bd5"/><rect x="2" y="4.5" width="1.4" height="6" fill="#f0a140"/><path d="M7.5,7 H14.5 L12,10.5 V14.5 L10,15.5 V10.5 Z" fill="#777"/></g><g transform="translate(680,177.5)"><rect x="0" y="0.5" width="13.5" height="14" fill="#f2f2f2"/><rect x="0" y="0.5" width="13.5" height="2" fill="#5b9bd5"/><path d="M0,6 H13.5 M0,9.5 H13.5 M4.5,2.5 V14.5 M9,2.5 V14.5" stroke="#aaa" stroke-width="0.7"/></g><g transform="translate(700,177.5)"><rect x="0" y="0.5" width="13.5" height="14" fill="#f2f2f2"/><rect x="0" y="0.5" width="13.5" height="2" fill="#5b9bd5"/><rect x="4.5" y="6" width="9" height="8.5" fill="#d6e6f7"/><path d="M0,6 H13.5 M0,9.5 H13.5 M4.5,2.5 V14.5 M9,2.5 V14.5" stroke="#aaa" stroke-width="0.7"/></g><g transform="translate(720,177.5)"><text x="6.7" y="14" font-family="Liberation Sans" font-size="17" fill="#9fc2ea" text-anchor="middle">R</text></g><g transform="translate(740,177.5)"><circle cx="6.8" cy="7.5" r="6.8" fill="#9a9a9a"/><circle cx="6.8" cy="7.5" r="5.6" fill="#4fb585"/><path d="M4,3 L8,2.5 L9,6 L7,9 L8,12 L5,12 L4.5,8 L3,6 Z" fill="#3d7cc0"/><circle cx="9.5" cy="8" r="1.2" fill="#3d7cc0"/></g><g transform="translate(760,177.5)"><rect x="-1.5" y="0.5" width="15.5" height="15" fill="none" stroke="#f2c811" stroke-width="1.6"/><rect x="0" y="2" width="12.5" height="12" fill="#f2c811"/><circle cx="6.3" cy="8" r="5.3" fill="#222"/><path d="M5,5.7 L8.8,8 L5,10.3 Z" fill="#f2c811"/></g>
<circle cx="662.2" cy="201.3" r="0.95" fill="#ddd"/><circle cx="666.9" cy="201.3" r="0.95" fill="#ddd"/><circle cx="671.6" cy="201.3" r="0.95" fill="#ddd"/>
</svg>
<div class="a" style="left:653px;top:210.8px;width:129px;height:25.8px;background:#262626"></div>
<svg style="left:0;top:0" width="911" height="442">
<rect x="668.6" y="216.8" width="14.4" height="12.8" fill="none" stroke="#d8d8d8" stroke-width="1" stroke-dasharray="1.3 0.7"/>
<path d="M668.6,219.8 H683 M668.6,222.5 H683 M668.6,225 H683 M668.6,227.4 H683" stroke="#cfcfcf" stroke-width="0.8" stroke-dasharray="1.2 0.8"/>
<rect x="662.7" y="234.8" width="25.8" height="2.2" fill="#f2c811"/>
<rect x="697.3" y="216.6" width="13.6" height="3.8" rx="1.9" fill="none" stroke="#d8d8d8" stroke-width="1"/>
<path d="M710.3,218.6 V221.5 H703.5 V223" fill="none" stroke="#d8d8d8" stroke-width="0.9"/>
<rect x="701.8" y="223" width="3.4" height="7" rx="1.5" fill="none" stroke="#d8d8d8" stroke-width="1"/>
<circle cx="730.8" cy="222.8" r="5.8" fill="none" stroke="#d8d8d8" stroke-width="1.1"/>
<path d="M734.9,226.9 L739.6,230.3" stroke="#d8d8d8" stroke-width="1.4"/>
<path d="M726.5,224 L729.5,221.5 L731.5,223 L735,220" fill="none" stroke="#d8d8d8" stroke-width="0.9"/>
<path d="M727.5,225.5 V228 M729.5,224 V228.5 M731.5,225 V228.5 M733.5,223 V227.5" stroke="#bbb" stroke-width="0.8"/>
</svg>


<div class="t" style="left:662.7px;top:242px;font-size:9px;color:#9a9a9a;transform:scaleX(0.92);transform-origin:0 0">Field</div>
<div class="a" style="left:657px;top:256.3px;width:120px;height:24.7px;border:1px dashed #585858;border-radius:2px"></div>
<div class="a" style="left:659.5px;top:259px;width:115px;height:15.6px;background:#303030;border-radius:2px"></div>
<div class="t" style="left:662.7px;top:262.5px;font-size:9px;color:#fff;transform:scaleX(0.92);transform-origin:0 0">Rok</div>
<svg style="left:0;top:0" width="911" height="442">
<path d="M755.5,265.8 H759.5 L757.5,268.2 Z" fill="#8a8a8a"/>
<path d="M766.3,263.3 L772,269 M772,263.3 L766.3,269" stroke="#e0e0e0" stroke-width="1.2"/>
</svg>
<div class="a" style="left:777.7px;top:237px;width:3.8px;height:141px;background:#9c9c9c"></div>
<div class="a" style="left:653px;top:284.5px;width:125px;height:25.5px;background:#262626"></div>
<div class="t" style="left:664.2px;top:295px;font-size:10.5px;font-weight:bold;color:#fff;transform:scaleX(0.93);transform-origin:0 0">FILTRY</div>
<div class="t" style="left:664px;top:321.8px;font-size:8.5px;color:#c8c8c8;letter-spacing:-0.05px">Filtry na poziomie elementu ...</div>
<div class="a" style="left:657px;top:338px;width:121px;height:29px;border:1px dashed #585858;border-radius:2px"></div>
<div class="a" style="left:659.5px;top:340.7px;width:115.5px;height:17.8px;background:#2e2e2e;border-radius:2px"></div>
<div class="t" style="left:665.3px;top:344px;font-size:8.5px;color:#fff;">Rok (Wszystko)</div>
<div class="t" style="left:662.7px;top:376px;font-size:8.3px;color:#c8c8c8;">Filtry na poziomie strony</div>
<div class="a" style="left:657.6px;top:392.7px;width:120px;height:17.7px;border:1px dashed #585858;border-radius:2px"></div>
<div class="t" style="left:663.4px;top:398px;font-size:8.4px;color:#d0d0d0;">Przeciągnij pola danych tutaj</div>
<div class="t" style="left:662.7px;top:419.6px;font-size:8.3px;color:#c8c8c8;">Filtry na poziomie raportu</div>
<div class="a" style="left:657.6px;top:435.8px;width:120px;height:4.2px;border:1px dashed #585858;border-bottom:none;border-radius:2px 2px 0 0"></div>


<div class="a" style="left:783px;top:73px;width:127px;height:33.5px;background:#232323"></div>
<div class="t" style="left:791.3px;top:85.5px;font-size:10.5px;font-weight:bold;color:#fff;transform:scaleX(0.88);transform-origin:0 0">POLA</div>
<svg style="left:0;top:0" width="911" height="442">
<path d="M896,86.8 L900.6,91 L896,95.2" fill="none" stroke="#cfcfcf" stroke-width="1.1"/>
</svg>
<div class="a" style="left:785px;top:110.3px;width:121.7px;height:20.8px;background:#262626;border:1px solid #1a1a1a"></div>
<svg style="left:0;top:0" width="911" height="442">
<circle cx="801.3" cy="118.8" r="3.3" fill="none" stroke="#c8c8c8" stroke-width="1"/>
<path d="M799,121.2 L794.3,126" stroke="#c8c8c8" stroke-width="1.2"/>
<path d="M793.2,148 V152.6 H788.6 Z" fill="#999"/>
<rect x="800" y="146" width="9" height="8.5" fill="#d8d8d8"/>
<path d="M800,148.8 H809 M800,151.6 H809 M803,146 V154.5 M806,146 V154.5" stroke="#444" stroke-width="0.6"/>
</svg>
<div class="t" style="left:810.5px;top:116.2px;font-size:9.2px;color:#b5b5b5;transform:scaleX(0.93);transform-origin:0 0">Wyszukaj</div>
<div class="t" style="left:818px;top:145.5px;font-size:9px;color:#e8c12f;transform:scaleX(0.95);transform-origin:0 0">5-letnie grupy wieku</div>
<div class="a" style="left:786px;top:161.7px;width:119px;height:13px;background:#5a5a5a;border:1px solid #6a6a6a;border-radius:2.5px"></div>
<div class="a" style="left:806.2px;top:163.7px;width:9px;height:9px;background:#f4f4f4"></div>
<svg style="left:0;top:0" width="911" height="442"><rect x="818.5" y="164.7" width="7" height="7" fill="#bdbdbd"/><path d="M818.5,167.0 H825.5 M818.5,169.29999999999998 H825.5 M820.8,164.7 V171.7 M823.2,164.7 V171.7" stroke="#575757" stroke-width="0.6"/></svg>
<div class="t" style="left:829.9px;top:164.5px;font-size:9px;color:#f0f0f0;transform:scaleX(0.93);transform-origin:0 0">Kobieta ujemna</div>
<div class="a" style="left:786px;top:177.3px;width:119px;height:13px;background:#5a5a5a;border:1px solid #6a6a6a;border-radius:2.5px"></div>
<div class="a" style="left:806.2px;top:179.3px;width:9px;height:9px;background:#f4f4f4"></div>
<div class="t" style="left:818.3px;top:180.3px;font-size:9px;color:#9a9a9a">&#931;</div>
<div class="t" style="left:829.9px;top:180.10000000000002px;font-size:9px;color:#f0f0f0;transform:scaleX(0.93);transform-origin:0 0">Kobiety</div>
<div class="a" style="left:786px;top:192.9px;width:119px;height:13px;background:#5a5a5a;border:1px solid #6a6a6a;border-radius:2.5px"></div>
<div class="a" style="left:806.2px;top:194.9px;width:9px;height:9px;background:#f4f4f4"></div>
<div class="t" style="left:818.3px;top:195.9px;font-size:9px;color:#9a9a9a">&#931;</div>
<div class="t" style="left:829.9px;top:195.70000000000002px;font-size:9px;color:#f0f0f0;transform:scaleX(0.93);transform-origin:0 0">Mężczyźni</div>
<div class="a" style="left:786px;top:208.5px;width:119px;height:13px;background:#5a5a5a;border:1px solid #6a6a6a;border-radius:2.5px"></div>
<div class="a" style="left:806.2px;top:210.5px;width:9px;height:9px;background:#f4f4f4"></div>
<div class="t" style="left:829.9px;top:211.3px;font-size:9px;color:#f0f0f0;transform:scaleX(0.93);transform-origin:0 0">Przedział</div>
<div class="a" style="left:786px;top:224.1px;width:119px;height:13px;background:#5a5a5a;border:1px solid #6a6a6a;border-radius:2.5px"></div>
<div class="a" style="left:806.2px;top:226.1px;width:9px;height:9px;background:#f2c811"></div>
<svg style="left:0;top:0" width="911" height="442"><path d="M807.5,230.4 L809.8,232.9 L814,227.6" fill="none" stroke="#333" stroke-width="1.2"/></svg>
<div class="t" style="left:818.3px;top:227.1px;font-size:9px;color:#9a9a9a">&#931;</div>
<div class="t" style="left:829.9px;top:226.9px;font-size:9px;color:#f0f0f0;transform:scaleX(0.93);transform-origin:0 0">Rok</div>
<div class="a" style="left:786px;top:239.7px;width:119px;height:13px;background:#5a5a5a;border:1px solid #6a6a6a;border-radius:2.5px"></div>
<div class="a" style="left:806.2px;top:241.7px;width:9px;height:9px;background:#f4f4f4"></div>
<div class="t" style="left:818.3px;top:242.7px;font-size:9px;color:#9a9a9a">&#931;</div>
<div class="t" style="left:829.9px;top:242.5px;font-size:9px;color:#f0f0f0;transform:scaleX(0.93);transform-origin:0 0">Sort ID</div>
<svg style="left:0;top:0" width="911" height="442"><path d="M358.2,328.5 L357.9,326.0 357.9,323.6 358.1,321.2 358.6,318.8 359.4,316.4 360.4,314.1 361.7,311.8 363.3,309.7 365.1,307.6 367.1,305.7 369.3,303.8 371.8,302.2 374.4,300.7 377.1,299.3 380.1,298.1 383.1,297.1 386.2,296.3 389.4,295.7 392.7,295.3 396.0,295.0 399.4,295.0 402.7,295.2 406.0,295.6 409.2,296.2 412.3,296.9 415.4,297.9 418.3,299.0 L419.6,297.4 421.1,295.9 422.7,294.4 424.5,293.1 426.5,291.8 428.5,290.7 430.7,289.7 433.0,288.8 435.4,288.1 437.8,287.5 440.3,287.1 442.8,286.8 445.4,286.7 447.9,286.7 450.5,286.9 453.0,287.2 455.5,287.7 457.9,288.3 460.3,289.0 462.6,289.9 464.7,290.9 466.7,292.1 468.6,293.4 L469.7,292.0 470.8,290.7 472.1,289.5 473.5,288.4 475.1,287.3 476.8,286.4 478.5,285.5 480.4,284.8 482.3,284.2 484.3,283.6 486.3,283.2 488.4,283.0 490.5,282.8 492.6,282.8 494.7,282.9 496.8,283.1 498.8,283.5 500.8,284.0 502.8,284.6 504.6,285.3 506.4,286.1 508.1,287.0 509.7,288.0 511.2,289.1 512.5,290.3 L514.1,289.1 515.8,287.9 517.7,286.8 519.6,285.9 521.6,285.1 523.8,284.4 526.0,283.8 528.2,283.4 530.5,283.0 532.8,282.9 535.2,282.8 537.5,282.9 539.8,283.2 542.1,283.6 544.3,284.1 546.5,284.7 548.6,285.5 550.6,286.4 552.4,287.4 554.2,288.5 555.9,289.7 557.4,291.0 558.7,292.4 559.9,293.8 561.0,295.4 561.8,296.9 562.5,298.6 563.0,300.2 L565.5,300.8 567.9,301.5 570.2,302.4 572.4,303.4 574.5,304.5 576.4,305.8 578.2,307.1 579.9,308.6 581.4,310.1 582.7,311.8 583.8,313.5 584.7,315.3 585.5,317.1 586.0,318.9 586.3,320.8 586.4,322.7 586.3,324.6 586.0,326.5 585.5,328.4 584.8,330.2 583.9,332.0 L585.7,333.9 587.4,336.0 588.8,338.1 590.0,340.3 590.9,342.6 591.6,344.9 592.0,347.2 592.2,349.6 592.1,352.0 591.8,354.3 591.2,356.7 590.3,358.9 589.2,361.2 587.9,363.3 586.3,365.4 584.5,367.4 582.5,369.2 580.3,371.0 578.0,372.6 575.4,374.0 572.7,375.3 569.9,376.5 566.9,377.5 563.9,378.3 560.8,378.9 557.6,379.3 L557.5,381.4 557.1,383.4 556.5,385.4 555.7,387.4 554.7,389.3 553.4,391.1 552.0,392.9 550.4,394.6 548.5,396.2 546.6,397.6 544.4,399.0 542.1,400.2 539.7,401.2 537.2,402.1 534.6,402.9 531.9,403.5 529.2,404.0 526.4,404.2 523.6,404.4 520.8,404.3 518.0,404.1 515.3,403.7 512.6,403.1 509.9,402.4 507.4,401.5 504.9,400.5 L503.9,402.8 502.6,405.0 501.0,407.1 499.3,409.1 497.3,410.9 495.1,412.7 492.7,414.3 490.2,415.8 487.5,417.2 484.7,418.3 481.7,419.3 478.7,420.1 475.6,420.8 472.4,421.2 469.2,421.5 465.9,421.5 462.7,421.4 459.5,421.1 456.3,420.6 453.2,419.9 450.2,419.0 447.3,417.9 444.5,416.7 441.9,415.3 439.4,413.8 437.1,412.1 435.0,410.3 433.1,408.4 L429.7,409.7 426.2,410.9 422.5,411.8 418.8,412.5 415.0,413.0 411.2,413.2 407.3,413.2 403.5,412.9 399.7,412.5 396.0,411.7 392.4,410.8 388.8,409.6 385.5,408.3 382.3,406.7 379.3,404.9 376.5,403.0 373.9,400.9 371.6,398.6 369.5,396.2 L367.4,396.3 365.3,396.3 363.2,396.2 361.2,395.9 359.1,395.5 357.1,395.0 355.2,394.4 353.3,393.7 351.5,392.9 349.9,391.9 348.3,390.9 346.9,389.7 345.6,388.5 344.4,387.3 343.4,385.9 342.5,384.5 341.8,383.0 341.2,381.6 340.8,380.0 340.6,378.5 340.6,377.0 340.7,375.4 341.0,373.9 341.5,372.4 342.1,370.9 342.9,369.5 343.9,368.1 345.0,366.8 346.2,365.5 347.6,364.4 L345.8,363.5 344.2,362.6 342.6,361.6 341.2,360.4 339.8,359.2 338.7,358.0 337.6,356.6 336.8,355.2 336.0,353.8 335.5,352.3 335.1,350.8 334.9,349.2 334.8,347.7 334.9,346.1 335.2,344.6 335.6,343.1 336.2,341.6 337.0,340.2 337.9,338.8 339.0,337.5 340.2,336.2 341.5,335.0 343.0,333.9 344.6,332.9 346.3,332.0 348.1,331.2 349.9,330.5 351.9,329.9 353.9,329.5 355.9,329.1 358.0,328.9 Z M362.9,366.4 L360.7,366.4 358.4,366.3 356.2,366.1 354.0,365.7 351.9,365.2 349.8,364.6 347.9,363.8 M376.2,394.4 L374.1,394.9 371.9,395.3 369.6,395.6 M433.1,407.8 L431.6,406.0 430.2,404.2 429.1,402.2 M506.5,393.9 L506.2,396.0 505.7,398.0 505.0,400.0 M537.9,356.3 L539.7,356.9 541.4,357.7 543.0,358.5 544.6,359.3 546.1,360.2 547.5,361.2 548.8,362.3 550.1,363.4 551.3,364.5 552.3,365.7 553.3,366.9 554.2,368.2 555.0,369.5 555.7,370.9 556.3,372.2 556.8,373.6 557.1,375.0 557.4,376.4 557.6,377.9 557.6,379.3 M583.7,331.6 L582.5,333.6 581.0,335.4 579.2,337.1 577.3,338.8 575.1,340.2 M563.1,299.8 L562.7,301.2 562.1,302.6 561.4,303.9 M508.0,295.0 L509.3,293.2 510.8,291.5 512.5,289.9 M466.8,297.5 L467.3,296.0 468.0,294.5 468.9,293.0 M418.3,299.0 L421.0,300.3 423.6,301.8 426.0,303.3 M359.6,333.0 L359.0,331.5 358.6,330.0 358.2,328.5" fill="none" stroke="#2a9ad8" stroke-width="2" stroke-linejoin="round" stroke-linecap="round"/></svg>
</body></html>
